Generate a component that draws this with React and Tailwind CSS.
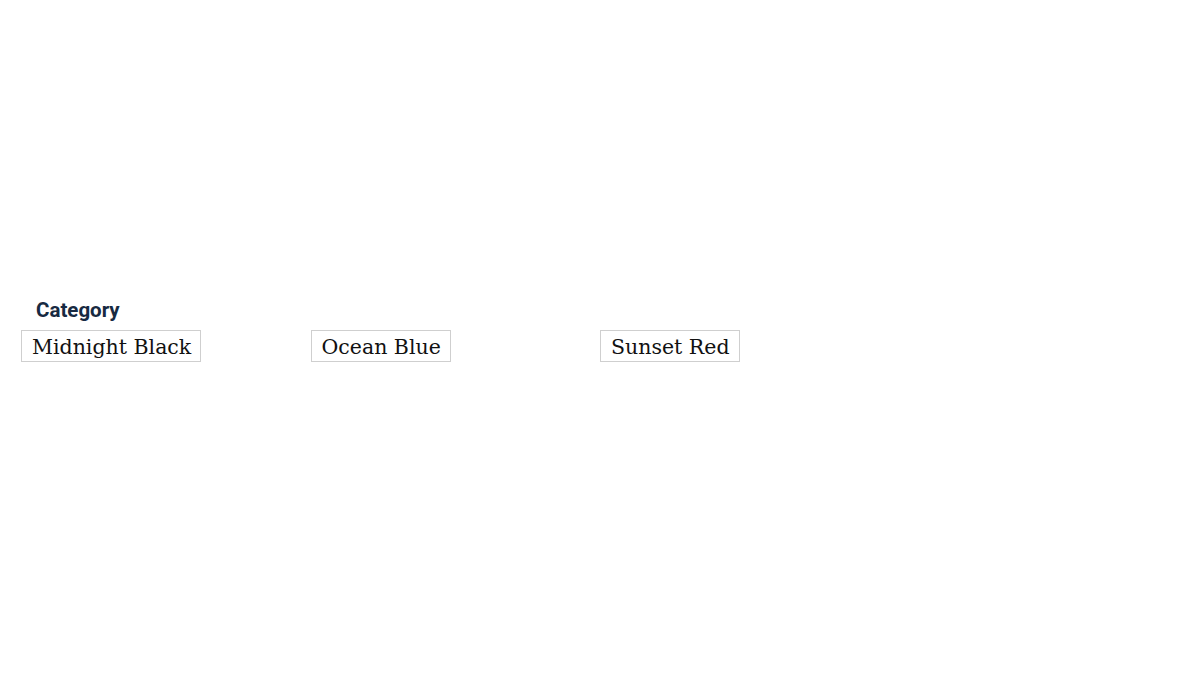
import React from 'react';

const options = ['Midnight Black', 'Ocean Blue', 'Sunset Red'];

const App = () => {
  return (
    <div className="w-[1200px] h-[675px] bg-white flex flex-col justify-center pl-[21px]">
      <div className="-mt-[16px]">
        <h2 className="pl-[15px] text-[20.5px] leading-[24px] font-bold text-[#172a42] mb-[8px]" style={{ fontFamily: 'Roboto, "Noto Sans", sans-serif' }}>
          Category
        </h2>
        <div className="grid grid-cols-[289.5px_289.5px_289.5px]">
          {options.map(opt => (
            <div key={opt}>
              <button
                className="border border-[#cfcfcf] bg-white pl-[10px] pr-[9px] h-[32px] pt-[2px] text-[20.5px] leading-[28px] text-[#111]"
                style={{ fontFamily: '"DejaVu Serif", serif' }}
              >
                {opt}
              </button>
            </div>
          ))}
        </div>
      </div>
    </div>
  );
};

export default App;
